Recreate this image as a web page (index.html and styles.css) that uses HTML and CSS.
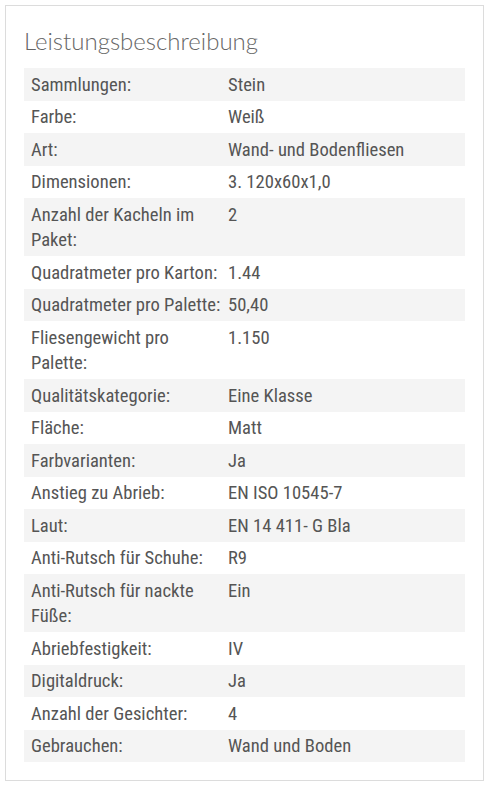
FILE: index.html
```html
<!DOCTYPE html>
<html>
<head><meta charset="utf-8"><link rel="stylesheet" href="styles.css"></head>
<body>
<section class="box">
  <h2 class="title">Leistungsbeschreibung</h2>
  <table class="specs">
    <colgroup><col class="c1"><col class="c2"></colgroup>
    <tbody>
      <tr><td>Sammlungen:</td><td>Stein</td></tr>
      <tr><td>Farbe:</td><td>Weiß</td></tr>
      <tr><td>Art:</td><td>Wand- und Bodenfliesen</td></tr>
      <tr><td>Dimensionen:</td><td>3. 120x60x1,0</td></tr>
      <tr><td>Anzahl der Kacheln im Paket:</td><td>2</td></tr>
      <tr><td>Quadratmeter pro Karton:</td><td>1.44</td></tr>
      <tr><td>Quadratmeter pro Palette:</td><td>50,40</td></tr>
      <tr><td>Fliesengewicht pro Palette:</td><td>1.150</td></tr>
      <tr><td>Qualitätskategorie:</td><td>Eine Klasse</td></tr>
      <tr><td>Fläche:</td><td>Matt</td></tr>
      <tr><td>Farbvarianten:</td><td>Ja</td></tr>
      <tr><td>Anstieg zu Abrieb:</td><td>EN ISO 10545-7</td></tr>
      <tr><td>Laut:</td><td>EN 14 411- G Bla</td></tr>
      <tr><td>Anti-Rutsch für Schuhe:</td><td>R9</td></tr>
      <tr><td>Anti-Rutsch für nackte Füße:</td><td>Ein</td></tr>
      <tr><td>Abriebfestigkeit:</td><td>IV</td></tr>
      <tr><td>Digitaldruck:</td><td>Ja</td></tr>
      <tr><td>Anzahl der Gesichter:</td><td>4</td></tr>
      <tr><td>Gebrauchen:</td><td>Wand und Boden</td></tr>
    </tbody>
  </table>
</section>
</body>
</html>
```
FILE: styles.css
```css
html, body { background: #fff; }
body { margin: 5px; }
.box {
  width: 479px;
  box-sizing: border-box;
  border: 1px solid #dcdcdc;
  padding: 20px 18px 18px 18px;
}
.title {
  margin: 0 0 12px 0;
  font-family: Lato, "Open Sans", sans-serif;
  font-weight: 300;
  font-size: 24px;
  line-height: 30px;
  color: #666;
  letter-spacing: 0;
}
.specs {
  width: 100%;
  border-collapse: collapse;
  table-layout: fixed;
  font-family: "Roboto Condensed", Roboto, sans-serif;
  font-size: 18.6px;
  line-height: 25.5px;
  color: #555;
}
.c1 { width: 197px; }
.specs td {
  padding: 4.5px 0 2.5px 7px;
  vertical-align: top;
}
.specs tr:nth-child(odd) { background: #f4f4f4; }
```
